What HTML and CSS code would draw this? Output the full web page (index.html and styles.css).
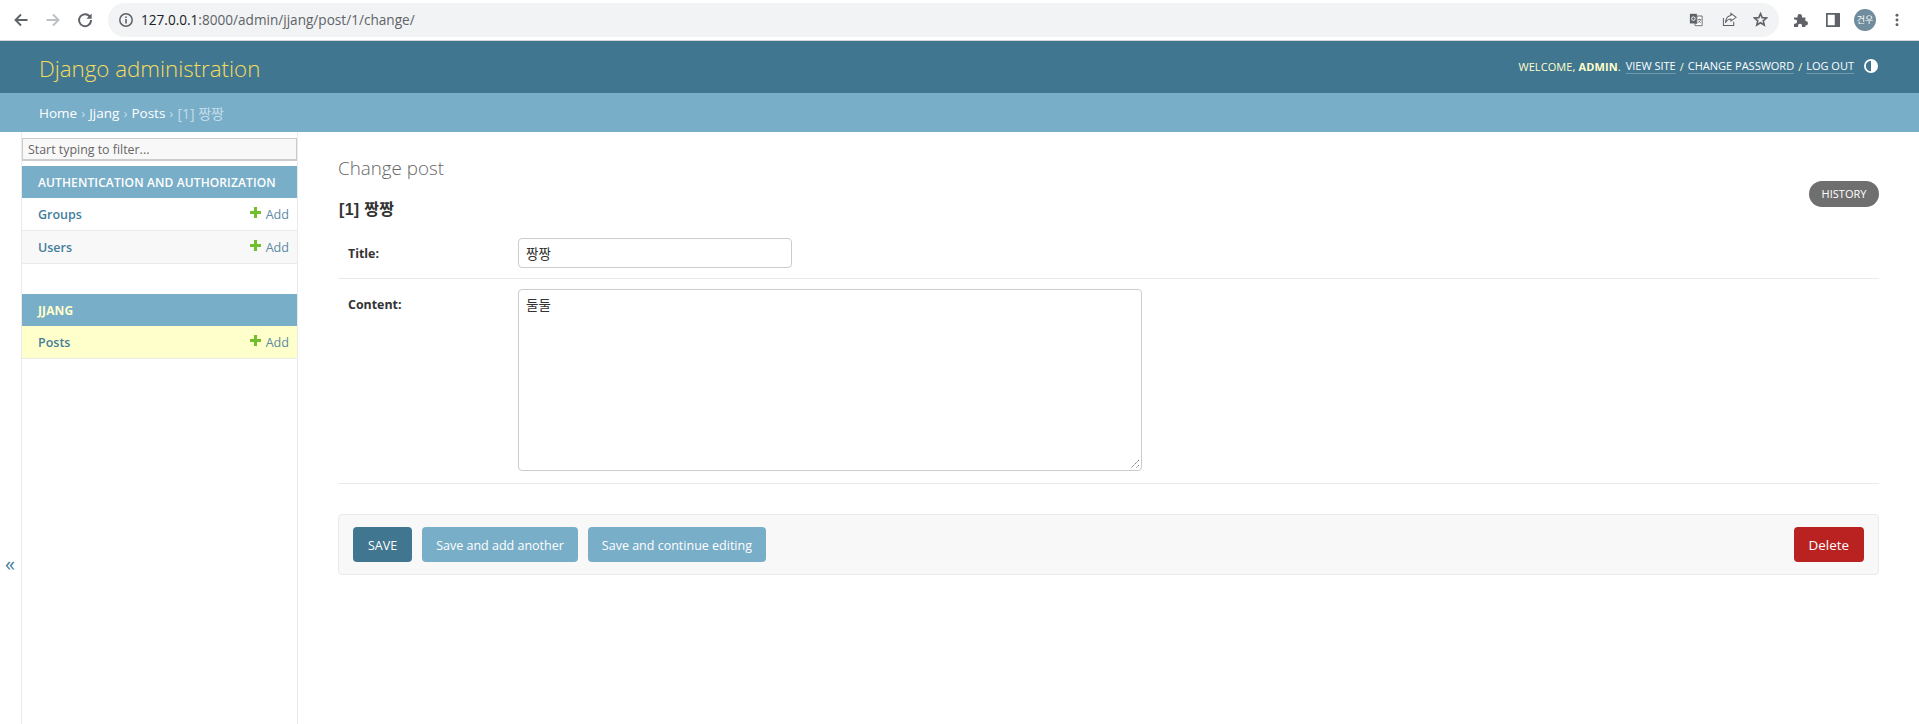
FILE: index.html
```html
<!DOCTYPE html>
<html lang="ko">
<head>
<meta charset="utf-8">
<title>Change post</title>
<link rel="stylesheet" href="styles.css">
</head>
<body>
<div class="chrome">
  <svg class="nav-icon nav-first" viewBox="0 0 16 16"><path d="M14.5 8H3M8 2.5 2.5 8 8 13.5" fill="none" stroke="#5f6368" stroke-width="1.9"/></svg>
  <svg class="nav-icon" viewBox="0 0 16 16"><path d="M1.5 8H13M8 2.5 13.5 8 8 13.5" fill="none" stroke="#bdc1c6" stroke-width="1.9"/></svg>
  <svg class="nav-icon" viewBox="0 0 16 16"><path d="M13.2 5.2A6 6 0 1 0 14 8" fill="none" stroke="#5f6368" stroke-width="1.9"/><path d="M14.6 1.6v5.2H9.4z" fill="#5f6368"/></svg>
  <div class="omnibox">
    <svg class="info" viewBox="0 0 16 16"><circle cx="8" cy="8" r="6.2" fill="none" stroke="#5f6368" stroke-width="1.5"/><path d="M8 7v4.4M8 4.4v1.5" stroke="#5f6368" stroke-width="1.6"/></svg>
    <span class="url"><span class="url-host">127.0.0.1</span>:8000/admin/jjang/post/1/change/</span>
    <svg class="omni-icon omni-translate" viewBox="0 0 16 16"><path d="M1 1.5h8v11H1z" fill="#5f6368"/><path d="M9 4h6v11H7l-.5-2.5H9z" fill="#fff" stroke="#5f6368"/><circle cx="5" cy="7" r="2" fill="none" stroke="#fff" stroke-width="1.1"/><path d="M10 8h4M12 7v1M10.5 12l3-3.500M11 9l2.500 3" stroke="#5f6368" stroke-width=".8" fill="none"/></svg>
    <svg class="omni-icon omni-share" viewBox="0 0 16 16"><path d="M1.500 6.500v8h11v-4" fill="none" stroke="#5f6368" stroke-width="1.100"/><path d="M9.500 1.500 15 5.700 9.500 9.500V7.500C6.500 7.500 5 9 3.700 11.500 4 7.500 6 4.300 9.500 3.800z" fill="#fff" stroke="#5f6368" stroke-width="1.100"/></svg>
    <svg class="omni-icon omni-star" viewBox="0 0 16 16"><path d="M8 1.800 9.800 6l4.600.4-3.500 3 1.100 4.500L8 11.500l-4 2.400 1.100-4.500-3.500-3L6.200 6z" fill="none" stroke="#5f6368" stroke-width="1.700"/></svg>
  </div>
  <svg class="tool-icon tool-ext" viewBox="0 0 16 16"><path d="M0 5h4V3.600a2.600 2.600 0 0 1 5.200 0V5H13v4h.4a2.600 2.600 0 0 1 0 5.200H13V16H9.200v-1.400a2.300 2.300 0 0 0-4.600 0V16H0v-3.800h1.200a2.400 2.400 0 0 0 0-4.800H0z" fill="#5f6368"/></svg>
  <svg class="tool-icon tool-side" viewBox="0 0 16 16"><path d="M0 0h16v16H0z" fill="#5f6368"/><path d="M2 2h8v12H2z" fill="#fff"/></svg>
  <div class="avatar">건우</div>
  <svg class="tool-menu" viewBox="0 0 4 16"><circle cx="2" cy="2.500" r="1.700" fill="#5f6368"/><circle cx="2" cy="8" r="1.700" fill="#5f6368"/><circle cx="2" cy="13.500" r="1.700" fill="#5f6368"/></svg>
</div>

<header class="site-header">
  <a class="brand">Django administration</a>
  <div class="user-tools">
    <span class="welcome">WELCOME, <strong>ADMIN</strong>.</span>
    <a class="user-link">VIEW SITE</a> <span>/</span>
    <a class="user-link">CHANGE PASSWORD</a> <span>/</span>
    <a class="user-link">LOG OUT</a>
    <svg class="theme" viewBox="0 0 14 14"><circle cx="7" cy="7" r="7" fill="#fff"/><path d="M7 1.800a5.200 5.200 0 0 0 0 10.400z" fill="#417690"/></svg>
  </div>
</header>

<nav class="breadcrumbs">
  <a>Home</a><span class="sep">›</span><a>Jjang</a><span class="sep">›</span><a>Posts</a><span class="sep">›</span><span class="current">[1] 짱짱</span>
</nav>

<div class="main">
  <div class="toggle"><span class="toggle-mark">«</span></div>
  <aside class="sidebar">
    <div class="filter">Start typing to filter...</div>
    <div class="caption">AUTHENTICATION AND AUTHORIZATION</div>
    <div class="row"><a class="model">Groups</a><a class="add"><svg class="plus" viewBox="0 0 10 10"><path d="M3.600 0h2.800v3.600H10v2.800H6.400V10H3.600V6.400H0V3.600h3.600z" fill="#70bf2b"/></svg>Add</a></div>
    <div class="row row-alt"><a class="model">Users</a><a class="add"><svg class="plus" viewBox="0 0 10 10"><path d="M3.600 0h2.800v3.600H10v2.800H6.400V10H3.600V6.400H0V3.600h3.600z" fill="#70bf2b"/></svg>Add</a></div>
    <div class="caption caption-app">JJANG</div>
    <div class="row row-current"><a class="model">Posts</a><a class="add"><svg class="plus" viewBox="0 0 10 10"><path d="M3.600 0h2.800v3.600H10v2.800H6.400V10H3.600V6.400H0V3.600h3.600z" fill="#70bf2b"/></svg>Add</a></div>
  </aside>
  <main class="content">
    <h1 class="page-title">Change post</h1>
    <div class="head-row">
      <h2 class="object-title">[1] 짱짱</h2>
      <a class="history">HISTORY</a>
    </div>
    <div class="form-row form-row-title">
      <label class="field-label">Title:</label>
      <div class="input">짱짱</div>
    </div>
    <div class="form-row form-row-content">
      <label class="field-label">Content:</label>
      <div class="textarea">둘둘
        <svg class="grip" viewBox="0 0 10 10"><path d="M9 1 1 9M9 6 6 9" stroke="#777" stroke-width="1" stroke-dasharray="1.500 .7" fill="none"/></svg>
      </div>
    </div>
    <div class="submit-row">
      <a class="btn btn-save">SAVE</a>
      <a class="btn">Save and add another</a>
      <a class="btn">Save and continue editing</a>
      <a class="btn btn-delete">Delete</a>
    </div>
  </main>
</div>
</body>
</html>
```
FILE: styles.css
```css
* { box-sizing: border-box; }
html, body { margin: 0; height: 100%; }
body {
  width: 1919px;
  height: 724px;
  overflow: hidden;
  display: flex;
  flex-direction: column;
  background: #fff;
  color: #333;
  font-family: "Open Sans", "Noto Sans CJK KR", sans-serif;
  font-size: 13px;
}
a { color: inherit; text-decoration: none; }

.chrome {
  height: 41px;
  flex: none;
  display: flex;
  align-items: center;
  border-bottom: 1px solid #d3d5d7;
  background: #fff;
  padding-bottom: 1px;
}
.nav-icon { width: 16px; height: 16px; margin-right: 16px; flex: none; }
.nav-first { margin-left: 13px; }
.omnibox {
  width: 1671px;
  height: 34px;
  margin-left: -1px;
  border-radius: 17px;
  background: #f1f3f4;
  display: flex;
  align-items: center;
  padding-left: 10px;
}
.info { width: 16px; height: 16px; flex: none; }
.url {
  margin-left: 7px;
  flex: 1;
  font-family: "Open Sans", sans-serif;
  font-size: 13.6px;
  color: #5f6368;
}
.url-host { color: #202124; }
.omni-icon { width: 15px; height: 15px; flex: none; }
.omni-translate { width: 14px; margin-right: 19px; }
.omni-share { margin-right: 16px; }
.omni-star { margin-right: 11px; }
.tool-icon { width: 14px; height: 14px; flex: none; }
.tool-ext { margin-left: 15px; }
.tool-side { margin-left: 18px; }
.avatar {
  width: 22px;
  height: 22px;
  margin-left: 14px;
  border-radius: 50%;
  background: #6f8d9c;
  color: #fff;
  font-family: "Noto Sans CJK KR", sans-serif;
  font-size: 9px;
  display: flex;
  align-items: center;
  justify-content: center;
}
.tool-menu { width: 4px; height: 14px; margin-left: 19px; flex: none; }

.site-header {
  height: 52px;
  flex: none;
  background: #417690;
  color: #ffc;
  padding: 0 40px 0 39px;
  display: flex;
  align-items: center;
  justify-content: space-between;
}
.brand {
  color: #f5dd5d;
  font-family: "Open Sans", sans-serif;
  font-weight: 300;
  font-size: 22.3px;
  margin-top: 2px;
}
.user-tools {
  display: flex;
  align-items: center;
  gap: 4px;
  font-size: 11px;
  white-space: nowrap;
  margin-top: -2px;
}
.welcome { letter-spacing: .1px; margin-right: 1px; }
.user-tools strong { font-weight: 700; color: #ffc; }
.user-link { border-bottom: 1px solid rgba(255,255,255,.25); color: #fff; line-height: 14px; }
.theme { width: 14px; height: 14px; margin-left: 6px; margin-right: 1px; }

.breadcrumbs {
  height: 39px;
  flex: none;
  background: #79aec8;
  color: #c4dce8;
  padding: 0 39px;
  display: flex;
  align-items: center;
  font-size: 13.5px;
}
.breadcrumbs a { color: #fff; }
.sep { margin: 0 4px; }
.current { font-family: "Open Sans", "Noto Sans CJK KR", sans-serif; font-size: 14px; }

.main { flex: 1; display: flex; min-height: 0; }
.toggle {
  width: 22px;
  flex: none;
  border-right: 1px solid #eaeaea;
  display: flex;
  align-items: center;
  justify-content: center;
  color: #447e9b;
  font-size: 20px;
  padding-top: 270px;
}
.toggle-mark { margin-left: -1px; }
.sidebar {
  width: 276px;
  flex: none;
  border-right: 1px solid #eaeaea;
  padding-top: 6px;
}
.filter {
  height: 23px;
  margin-bottom: 5px;
  padding-left: 5px;
  background: #f8f8f8;
  border: 2px solid #ccc;
  border-width: 1px 1px 2px 1px;
  color: #666;
  font-size: 12.4px;
  line-height: 21px;
}
.caption {
  height: 32px;
  background: #79aec8;
  color: #fff;
  font-size: 12px;
  font-weight: 550;
  padding-left: 16px;
  line-height: 34px;
  letter-spacing: .12px;
}
.caption-app { margin-top: 30px; color: #ffc; font-weight: 700; }
.row {
  height: 33px;
  display: flex;
  align-items: center;
  justify-content: space-between;
  padding: 0 8px 0 16px;
  border-bottom: 1px solid #eaeaea;
  background: #fff;
}
.row-alt { background: #f8f8f8; }
.row-current { background: #ffc; }
.model { color: #447e9b; font-weight: 550; font-size: 12.5px; }
.add { color: #5c8aa2; font-size: 12.6px; display: flex; align-items: center; }
.plus { width: 11px; height: 11px; margin-right: 5px; margin-top: -4px; }

.content { flex: 1; padding: 23px 40px 0 40px; min-width: 0; }
.page-title {
  margin: 0;
  font-weight: 300;
  font-size: 18.8px;
  line-height: 26px;
  color: #666;
}
.head-row {
  display: flex;
  justify-content: space-between;
  align-items: flex-start;
  height: 57px;
}
.object-title {
  margin: 19px 0 0 1px;
  font-size: 16px;
  font-weight: 700;
  line-height: 20px;
  letter-spacing: .3px;
  color: #333;
  font-family: "Liberation Sans", "Noto Sans CJK KR", sans-serif;
}
.history {
  width: 70px;
  height: 26px;
  padding-bottom: 1px;
  border-radius: 13px;
  background: #6f6f6f;
  color: #fff;
  font-size: 11px;
  display: flex;
  align-items: center;
  justify-content: center;
}
.form-row {
  display: flex;
  padding: 0 0 0 10px;
  border-bottom: 1px solid #eaeaea;
}
.form-row-title { height: 41px; }
.form-row-content { height: 205px; padding-top: 10px; }
.field-label {
  width: 170px;
  flex: none;
  font-weight: 700;
  font-size: 12.4px;
  color: #333;
  padding-top: 6px;
  line-height: 20px;
}
.input {
  width: 274px;
  height: 30px;
  border: 1px solid #ccc;
  border-radius: 4px;
  padding: 0 7px;
  font-family: "Noto Sans CJK KR", sans-serif;
  font-size: 13.500px;
  line-height: 29px;
  color: #333;
}
.textarea {
  position: relative;
  width: 624px;
  height: 182px;
  border: 1px solid #ccc;
  border-radius: 4px;
  padding: 4px 7px;
  font-family: "Noto Sans CJK KR", sans-serif;
  font-size: 13.500px;
  line-height: 20px;
  color: #333;
}
.grip { position: absolute; right: 1px; bottom: 1px; width: 10px; height: 10px; }
.submit-row {
  margin-top: 30px;
  height: 61px;
  display: flex;
  align-items: center;
  gap: 10px;
  padding: 0 14px;
  background: #f8f8f8;
  border: 1px solid #eaeaea;
  border-radius: 4px;
}
.btn {
  height: 35px;
  padding: 1px 14px 0;
  border-radius: 4px;
  background: #79aec8;
  color: #fff;
  font-size: 12.5px;
  display: flex;
  align-items: center;
}
.btn-save { background: #417690; padding: 1px 15px 0; }
.btn-delete { background: #ba2121; margin-left: auto; font-size: 13.400px; padding: 1px 15px 0; }
```
